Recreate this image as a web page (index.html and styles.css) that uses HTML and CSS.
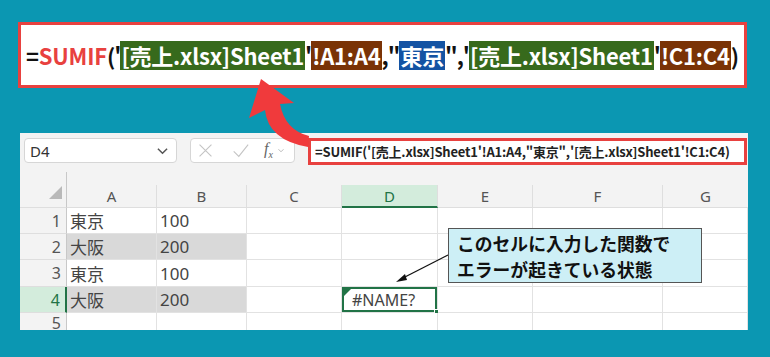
FILE: index.html
```html
<!DOCTYPE html>
<html lang="ja">
<head>
    <meta charset="UTF-8">
    <title>SUMIF #NAME?</title>
    <link rel="stylesheet" href="styles.css">
</head>
<body>
<div class="page">
    <div class="formula-big">
        <span>=</span><span class="fn">SUMIF</span><span class="p">('</span><span class="hl hl--book">[売上.xlsx]Sheet1</span><span class="p">'</span><span class="hl hl--range">!A1:A4</span><span class="p">,"</span><span class="hl hl--crit">東京</span><span class="p">",'</span><span class="hl hl--book">[売上.xlsx]Sheet1</span><span class="p">'</span><span class="hl hl--range">!C1:C4</span><span>)</span>
    </div>

    <div class="sheet">
        <div class="toolbar">
            <div class="namebox">
                <span>D4</span>
                <svg class="chev" viewBox="0 0 12 8"><path d="M1 1.5 L6 6.5 L11 1.5" /></svg>
            </div>
            <div class="fxbox">
                <svg class="ico" viewBox="0 0 20 20"><path d="M3 3 L17 17 M17 3 L3 17" /></svg>
                <svg class="ico ico--ok" viewBox="0 0 20 20"><path d="M2 11 L8 17 L19 3" /></svg>
                <span class="fx">f<sub>x</sub></span>
                <svg class="chev chev--sm" viewBox="0 0 12 8"><path d="M1 1.5 L6 6.5 L11 1.5" /></svg>
            </div>
            <div class="fbar">=SUMIF('[売上.xlsx]Sheet1'!A1:A4,"東京",'[売上.xlsx]Sheet1'!C1:C4)</div>
        </div>

        <div class="grid">
            <div class="corner"><span class="corner__tri"></span></div>
            <div class="colhead">A</div>
            <div class="colhead">B</div>
            <div class="colhead">C</div>
            <div class="colhead colhead--active">D</div>
            <div class="colhead">E</div>
            <div class="colhead">F</div>
            <div class="colhead colhead--last">G</div>

            <div class="rowhead">1</div>
            <div class="cell">東京</div><div class="cell">100</div><div class="cell"></div><div class="cell"></div><div class="cell"></div><div class="cell"></div><div class="cell"></div>

            <div class="rowhead">2</div>
            <div class="cell cell--fill">大阪</div><div class="cell cell--fill">200</div><div class="cell"></div><div class="cell"></div><div class="cell"></div><div class="cell"></div><div class="cell"></div>

            <div class="rowhead">3</div>
            <div class="cell">東京</div><div class="cell">100</div><div class="cell"></div><div class="cell"></div><div class="cell"></div><div class="cell"></div><div class="cell"></div>

            <div class="rowhead rowhead--active">4</div>
            <div class="cell cell--fill">大阪</div><div class="cell cell--fill">200</div><div class="cell"></div><div class="cell cell--selected">#NAME?</div><div class="cell"></div><div class="cell"></div><div class="cell"></div>

            <div class="rowhead rowhead--cut">5</div>
            <div class="cell"></div><div class="cell"></div><div class="cell"></div><div class="cell"></div><div class="cell"></div><div class="cell"></div><div class="cell"></div>
        </div>
    </div>

    <svg class="overlay" viewBox="0 0 770 357">
        <path class="pointer" d="M261 79 L249 118 L265 110 Q268 140 308 147 L309 136 Q285 130 280 104 L294 103 Z" />
        <path class="leader" d="M448 255 L401 279" />
        <path class="leader-head" d="M396 282 L405 274 L407 280 Z" />
    </svg>

    <div class="callout">このセルに入力した関数で<br>エラーが起きている状態</div>
</div>
</body>
</html>
```

FILE: styles.css
```css
*, *::before, *::after {
    box-sizing: border-box;
}
body {
    margin: 0;
    background: #0b97b2;
    font-family: "Noto Sans CJK JP", "Noto Sans", sans-serif;
}
.page {
    position: relative;
    width: 770px;
    height: 357px;
    padding-top: 22px;
    overflow: hidden;
}

/* big formula */
.formula-big {
    margin-left: 18px;
    width: 729px;
    height: 66px;
    background: #fff;
    border: 3px solid #e8413f;
    display: flex;
    align-items: center;
    padding-left: 5px;
    font-size: 22px;
    font-weight: 700;
    color: #111;
    white-space: nowrap;
    letter-spacing: -0.2px;
}
.formula-big span { line-height: 29px; }
.formula-big .p { letter-spacing: -1px; }
.fn { color: #e8413f; }
.hl { color: #fff; display: inline-block; padding: 0 1px; }
.hl--book { background: #376a1c; }
.hl--range { background: #7a3306; }
.hl--crit { background: #1453a3; }

/* sheet panel */
.sheet {
    margin: 45px 0 0 20px;
    width: 728px;
    height: 197px;
    background: #f3f3f3;
    overflow: hidden;
}
.toolbar {
    display: flex;
    align-items: flex-start;
    padding: 5px 0 0 4px;
}
.namebox {
    width: 153px;
    height: 25px;
    background: #fff;
    border: 1px solid #d6d6d6;
    border-radius: 4px;
    display: flex;
    align-items: center;
    justify-content: space-between;
    padding: 0 8px 0 5px;
    font-family: "Noto Sans", sans-serif;
    font-size: 15px;
    color: #333;
}
.chev {
    width: 11px;
    height: 8px;
    fill: none;
    stroke: #555;
    stroke-width: 1.6;
}
.chev--sm { width: 6px; height: 5px; stroke: #aaa; margin-left: 5px; }
.fxbox {
    margin-left: 13px;
    width: 105px;
    height: 25px;
    background: #fff;
    border: 1px solid #d6d6d6;
    border-radius: 4px;
    display: flex;
    align-items: center;
    padding: 0 0 0 6px;
}
.ico {
    width: 17px;
    height: 17px;
    fill: none;
    stroke: #c4c4c4;
    stroke-width: 1.3;
}
.ico--ok { margin-left: 18px; }
.fx {
    margin-left: 15px;
    font-family: "Liberation Serif", serif;
    font-style: italic;
    font-size: 16px;
    color: #666;
}
.fx sub { font-size: 10px; }
.fbar {
    margin-left: 13px;
    width: 439px;
    height: 27px;
    background: #fff;
    border: 3px solid #e8413f;
    display: flex;
    align-items: center;
    padding-left: 4px;
    font-size: 13px;
    font-weight: 700;
    color: #222;
    white-space: nowrap;
    letter-spacing: -0.2px;
}

/* grid */
.grid {
    margin-top: 7px;
    display: grid;
    grid-template-columns: 47px 90px 90px 95px 96px 95px 130px 85px;
    grid-template-rows: 36px 26px 26px 27px 26px 26px;
    font-family: "Noto Sans", "Noto Sans CJK JP", sans-serif;
}
.corner {
    border-right: 1px solid #c8c8c8;
    border-bottom: 1px solid #dedede;
    display: flex;
    align-items: flex-end;
    justify-content: flex-end;
    padding: 0 4px 8px 0;
}
.corner__tri {
    width: 0;
    height: 0;
    border-left: 13px solid transparent;
    border-bottom: 13px solid #b9b9b9;
}
.colhead {
    align-self: end;
    height: 23px;
    border-right: 1px solid #dedede;
    border-bottom: 1px solid #dedede;
    display: flex;
    align-items: center;
    justify-content: center;
    font-size: 15px;
    color: #555;
}
.colhead--last { border-right: 0; }
.colhead--active {
    background: #d3ecdc;
    color: #217346;
    border-bottom: 2px solid #217346;
}
.rowhead {
    border-right: 1px solid #c8c8c8;
    border-bottom: 1px solid #dedede;
    display: flex;
    align-items: center;
    justify-content: flex-end;
    padding-right: 5px;
    font-size: 16px;
    color: #555;
}
.rowhead--cut { align-items: flex-start; padding-top: 1px; line-height: 18px; }
.rowhead--active {
    background: #d3ecdc;
    color: #217346;
    border-right: 2px solid #217346;
}
.cell {
    position: relative;
    background: #fff;
    border-right: 1px solid #e2e2e2;
    border-bottom: 1px solid #e2e2e2;
    display: flex;
    align-items: center;
    padding-left: 3px;
    font-size: 17px;
    color: #444;
}
.cell--fill { background: #d9d9d9; }
.cell--selected {
    padding-left: 10px;
    font-size: 16px;
    box-shadow: inset 0 0 0 2px #217346;
}
.cell--selected::before {
    content: "";
    position: absolute;
    left: 2px;
    top: 2px;
    border-top: 7px solid #217346;
    border-right: 7px solid transparent;
}
.cell--selected::after {
    content: "";
    position: absolute;
    right: -4px;
    bottom: -4px;
    width: 7px;
    height: 7px;
    background: #217346;
    border: 1px solid #fff;
}

/* overlays */
.overlay {
    position: absolute;
    left: 0;
    top: 0;
    width: 770px;
    height: 357px;
    pointer-events: none;
}
.pointer { fill: #f03a3c; }
.leader { stroke: #111; stroke-width: 1.3; fill: none; }
.leader-head { fill: #111; }
.callout {
    position: absolute;
    left: 448px;
    top: 228px;
    width: 254px;
    height: 55px;
    background: #cdeff6;
    border: 1.5px solid #555;
    padding: 1px 0 0 8px;
    font-size: 17.8px;
    font-weight: 700;
    line-height: 26px;
    color: #111;
    white-space: nowrap;
}
```
